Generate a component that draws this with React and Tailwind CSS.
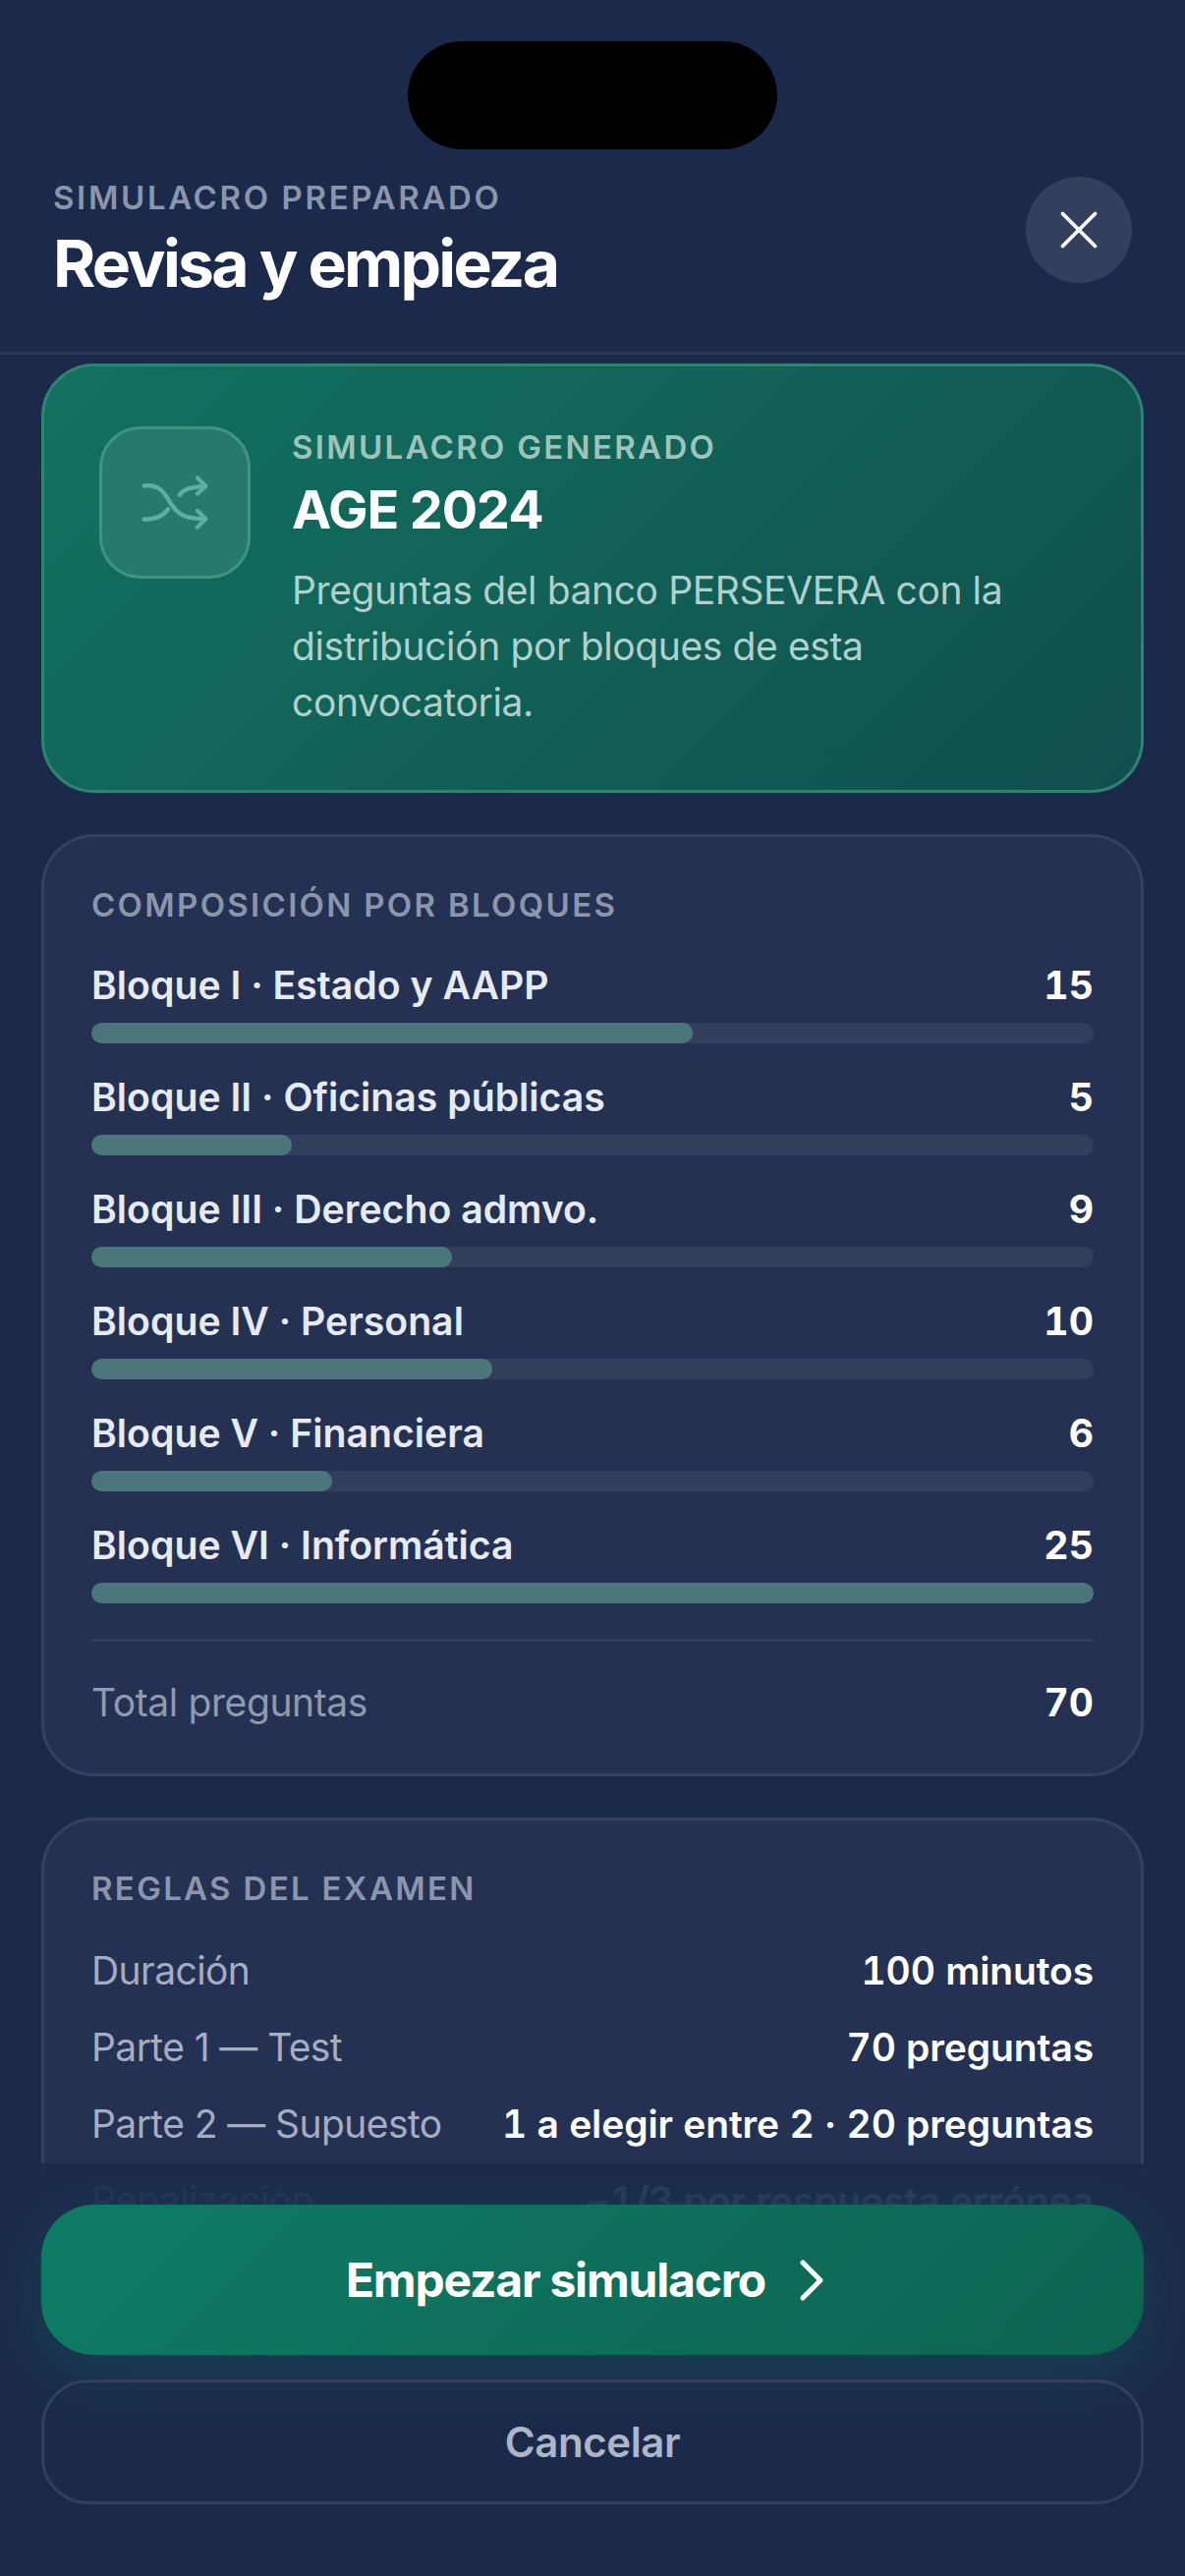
import React from 'react';
import { ChevronRight, X } from 'lucide-react';

const bloques = [
  { name: 'Bloque I · Estado y AAPP', count: 15 },
  { name: 'Bloque II · Oficinas públicas', count: 5 },
  { name: 'Bloque III · Derecho admvo.', count: 9 },
  { name: 'Bloque IV · Personal', count: 10 },
  { name: 'Bloque V · Financiera', count: 6 },
  { name: 'Bloque VI · Informática', count: 25 },
];

const reglas = [
  { label: 'Duración', value: '100 minutos' },
  { label: 'Parte 1 — Test', value: '70 preguntas' },
  { label: 'Parte 2 — Supuesto', value: '1 a elegir entre 2 · 20 preguntas' },
  { label: 'Penalización', value: '−1/3 por respuesta errónea' },
];

function ShuffleGlyph() {
  return (
    <svg viewBox="-4 -2 240 200" className="w-[80px] h-[67px] text-[#5cb09e]" fill="none" stroke="currentColor" strokeWidth="13" strokeLinecap="round" strokeLinejoin="round">
      <path d="M22 47C80 40 90 85 110 110C130 140 160 147 205 148" />
      <path d="M130 75C145 55 170 50 205 49" />
      <path d="M22 149C55 150 80 140 95 118" />
      <path d="M185 23L210 48L185 71" />
      <path d="M185 123L210 148L185 173" />
    </svg>
  );
}

export default function App() {
  const maxCount = 25;

  return (
    <div className="relative w-[1206px] h-[2622px] overflow-hidden bg-[#1b2a4b] font-['Inter',sans-serif] flex flex-col">
      {/* notch */}
      <div className="absolute left-[415px] top-[42px] w-[376px] h-[110px] rounded-[55px] bg-black" />

      <header className="shrink-0 flex justify-between items-start pt-[180px] px-[54px] pb-[57px] border-b-[3px] border-[#2b3a5b]">
        <div>
          <p className="text-[33px] leading-[42px] font-semibold tracking-[0.08em] text-[#8b96ad]">SIMULACRO PREPARADO</p>
          <h1 className="mt-[13px] text-[66px] leading-[66px] font-bold tracking-[-0.042em] text-white">Revisa y empieza</h1>
        </div>
        <button className="w-[108px] h-[108px] rounded-full bg-[#333f5c] flex items-center justify-center text-white">
          <X size={66} strokeWidth={1.4} />
        </button>
      </header>

      <main className="flex-1 min-h-0 overflow-hidden flex flex-col gap-[42px] pt-[9px] px-[42px]">
        <section className="shrink-0 h-[437px] rounded-[54px] border-[3px] border-[#2f8373] bg-[linear-gradient(135deg,#12725f,#104f4f)] pt-[61px] pl-[56px] pr-[48px] flex gap-[42px]">
          <div className="shrink-0 w-[154px] h-[155px] rounded-[42px] border-[3px] border-[#3f9484] bg-[#257a6a] flex items-center justify-center">
            <ShuffleGlyph />
          </div>
          <div>
            <p className="text-[33px] leading-[42px] font-semibold tracking-[0.07em] text-[#9cc4bd]">SIMULACRO GENERADO</p>
            <h2 className="mt-[10px] text-[54px] leading-[66px] font-bold tracking-[-0.02em] text-white">AGE 2024</h2>
            <p className="mt-[20px] text-[39px] leading-[57px] tracking-[-0.01em] text-[#b0d0cc]">
              Preguntas del banco PERSEVERA con la distribución por bloques de esta convocatoria.
            </p>
          </div>
        </section>

        <section className="shrink-0 rounded-[54px] border-[3px] border-[#36415f] bg-[#253152] pt-[48px] pb-[45px] px-[48px]">
          <p className="text-[33px] leading-[42px] font-semibold tracking-[0.07em] text-[#8b96ad]">COMPOSICIÓN POR BLOQUES</p>
          <div className="mt-[34px] flex flex-col gap-[28px]">
            {bloques.map((b) => (
              <div key={b.name}>
                <div className="flex justify-between text-[39.2px] leading-[54px]">
                  <span className="font-semibold text-[#e6ebf3]">{b.name}</span>
                  <span className="font-bold tabular-nums text-white">{b.count}</span>
                </div>
                <div className="mt-[11px] h-[21px] rounded-[10px] bg-[#323e5c] overflow-hidden">
                  <div className="h-full rounded-[10px] bg-[#4a7579]" style={{ width: `${(b.count / maxCount) * 100}%` }} />
                </div>
              </div>
            ))}
          </div>
          <div className="mt-[36px] pt-[35px] border-t-[3px] border-[#323e5c] flex justify-between text-[39px] leading-[54px]">
            <span className="tracking-[-0.01em] text-[#8f9ab0]">Total preguntas</span>
            <span className="font-bold tabular-nums text-white">70</span>
          </div>
        </section>

        <section className="shrink-0 rounded-[54px] border-[3px] border-[#36415f] bg-[#253152] pt-[48px] pb-[45px] px-[48px]">
          <p className="text-[33px] leading-[42px] font-semibold tracking-[0.07em] text-[#8b96ad]">REGLAS DEL EXAMEN</p>
          <div className="mt-[36px] flex flex-col gap-[24px]">
            {reglas.map((r) => (
              <div key={r.label} className="flex justify-between text-[39px] leading-[54px]">
                <span className="tracking-[-0.015em] text-[#a4adc1]">{r.label}</span>
                <span className="font-semibold tracking-[-0.003em] tabular-nums text-white">{r.value}</span>
              </div>
            ))}
          </div>
        </section>
      </main>

      {/* bottom actions lie over the scrolling list */}
      <div className="absolute left-0 right-0 bottom-0 top-[2202px] bg-gradient-to-b from-[#1b2a4be6] to-[#1b2a4b] to-[25%] px-[42px] pt-[42px] flex flex-col gap-[25px]">
        <button className="h-[153px] rounded-[54px] pl-[8px] bg-[linear-gradient(135deg,#0f7c65,#0c6350)] shadow-[0_18px_60px_rgba(16,128,104,0.28)] flex items-center justify-center gap-[11px] text-white">
          <span className="text-[48px] font-bold tracking-[-0.025em]">Empezar simulacro</span>
          <ChevronRight size={72} strokeWidth={1.7} />
        </button>
        <button className="h-[127px] rounded-[48px] border-[3px] border-[#333f5c] text-[42px] font-semibold tracking-[-0.01em] text-[#adb5c6]">
          Cancelar
        </button>
      </div>
    </div>
  );
}
